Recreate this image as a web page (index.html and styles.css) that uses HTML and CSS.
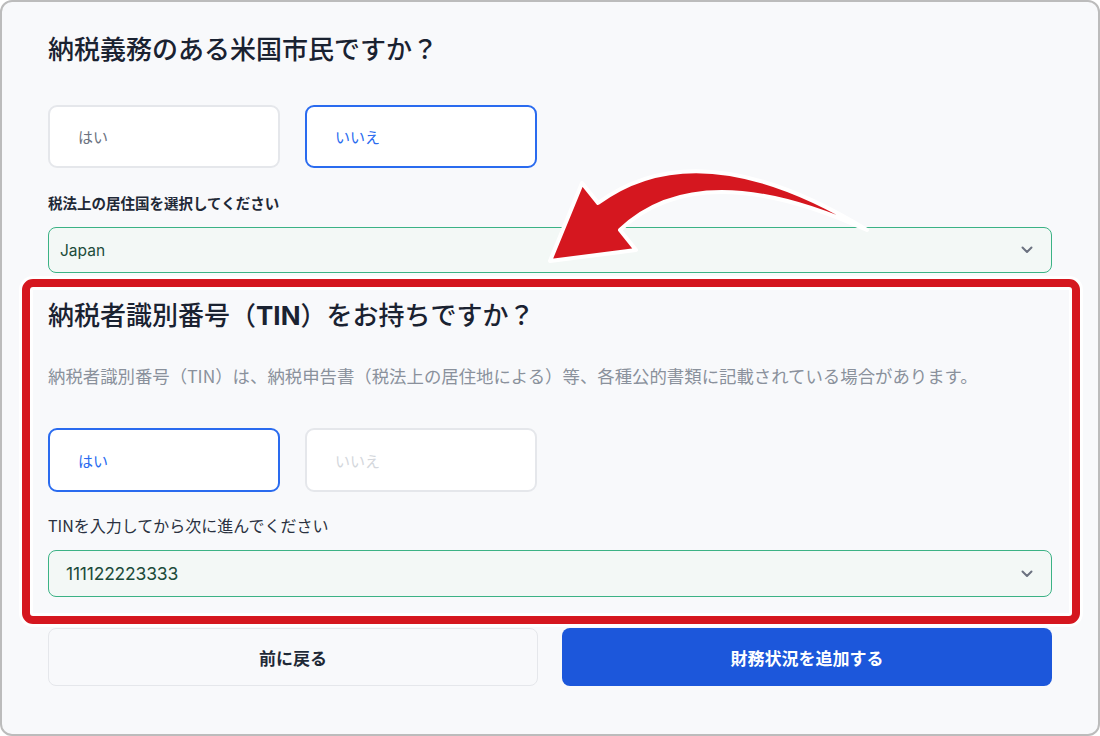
FILE: index.html
```html
<!DOCTYPE html>
<html lang="ja">
<head>
<meta charset="utf-8">
<title>TIN</title>
<link rel="stylesheet" href="styles.css">
</head>
<body>
<div class="frame">
  <h1 class="title">納税義務のある米国市民ですか？</h1>
  <div class="choices choices-1">
    <div class="choice">はい</div>
    <div class="choice selected">いいえ</div>
  </div>
  <div class="label label-bold">税法上の居住国を選択してください</div>
  <div class="select select-1">
    <span class="value value-1">Japan</span>
    <svg class="chev" width="12" height="8" viewBox="0 0 12 8"><path d="M1.5 1.5 L6 6 L10.5 1.5" fill="none" stroke="#6b7280" stroke-width="2" stroke-linecap="round" stroke-linejoin="round"/></svg>
  </div>

  <h2 class="title title-2">納税者識別番号（<b>TIN</b>）をお持ちですか？</h2>
  <p class="desc">納税者識別番号（TIN）は、納税申告書（税法上の居住地による）等、各種公的書類に記載されている場合があります。</p>
  <div class="choices choices-2">
    <div class="choice selected">はい</div>
    <div class="choice disabled">いいえ</div>
  </div>
  <div class="label label-2">TINを入力してから次に進んでください</div>
  <div class="select select-2">
    <span class="value value-2">111122223333</span>
    <svg class="chev" width="12" height="8" viewBox="0 0 12 8"><path d="M1.5 1.5 L6 6 L10.5 1.5" fill="none" stroke="#6b7280" stroke-width="2" stroke-linecap="round" stroke-linejoin="round"/></svg>
  </div>

  <div class="actions">
    <button class="btn btn-back">前に戻る</button>
    <button class="btn btn-primary">財務状況を追加する</button>
  </div>

  <div class="highlight"></div>
  <svg class="arrow" width="1100" height="736" viewBox="0 0 1100 736">
    <path d="M550 261 L582 183 L598 203 Q700 128 867 230 Q700 154 620 230 L636 250 Z" fill="#d5171f" stroke="#ffffff" stroke-width="4" stroke-linejoin="round"/>
  </svg>
</div>
</body>
</html>
```

FILE: styles.css
```css
* { box-sizing: border-box; }
html, body { margin: 0; padding: 0; }
body {
  width: 1100px;
  height: 736px;
  overflow: hidden;
  background: #ffffff;
  font-family: "Inter", "Noto Sans CJK JP", sans-serif;
}
.frame {
  position: relative;
  width: 1100px;
  height: 736px;
  border: 2px solid #bcbcbc;
  border-radius: 12px;
  background: #f8f9fb;
  padding: 28px 46px 0 46px;
  display: flex;
  flex-direction: column;
}
.title {
  margin: 0;
  font-size: 26px;
  line-height: 36px;
  font-weight: 500;
  color: #1a2231;
  font-family: "Noto Sans CJK JP", sans-serif;
}
.title b { font-family: "Inter", sans-serif; font-weight: 700; }
.choices {
  display: flex;
  gap: 25px;
}
.choices-1 { margin-top: 39px; }
.choices-2 { margin-top: 40px; }
.choice {
  width: 232px;
  height: 63px;
  border: 2px solid #e5e7eb;
  border-radius: 9px;
  background: #ffffff;
  display: flex;
  align-items: center;
  padding-left: 28px;
  font-size: 15px;
  color: #6b7280;
  font-family: "Noto Sans CJK JP", sans-serif;
}
.choices-2 .choice { height: 64px; }
.choice.selected {
  border-color: #2a6bef;
  color: #2a6bef;
}
.choice.disabled { color: #d4d7dc; }
.label {
  font-family: "Noto Sans CJK JP", sans-serif;
  color: #1f2937;
}
.label-bold {
  margin-top: 25px;
  font-size: 14.5px;
  line-height: 20px;
  font-weight: 600;
}
.label-2 {
  margin-top: 22px;
  font-size: 16px;
  line-height: 22px;
  font-weight: 400;
  color: #2a3140;
}
.select {
  margin-top: 14px;
  width: 1004px;
  height: 46px;
  border: 1px solid #3bb285;
  border-radius: 8px;
  background: #f3f8f6;
  display: flex;
  align-items: center;
  justify-content: space-between;
  padding: 0 18px 0 11px;
}
.select-2 { height: 47px; padding-left: 17px; }
.value {
  color: #1c4b3a;
  font-size: 15.5px;
}
.value-2 { font-size: 17.5px; letter-spacing: -0.2px; }
.chev { display: block; }
.title-2 { margin-top: 23px; }
.desc {
  margin: 30px 0 0 0;
  font-size: 17.4px;
  line-height: 24px;
  color: #8a919c;
  font-family: "Noto Sans CJK JP", sans-serif;
  white-space: nowrap;
}
.actions {
  margin-top: 31px;
  display: flex;
  gap: 24px;
}
.btn {
  width: 490px;
  height: 58px;
  border-radius: 8px;
  font-family: "Noto Sans CJK JP", sans-serif;
  font-size: 17px;
  font-weight: 700;
  cursor: pointer;
}
.btn-back {
  background: #f8f9fb;
  border: 1px solid #e5e7eb;
  color: #1f2937;
}
.btn-primary {
  background: #1c57db;
  border: none;
  color: #ffffff;
}
.highlight {
  position: absolute;
  left: 20px;
  top: 277px;
  width: 1058px;
  height: 345px;
  border: 8px solid #d5171f;
  border-radius: 11px;
  box-shadow: 0 0 0 3px #ffffff, inset 0 0 0 3px #ffffff;
  pointer-events: none;
}
.arrow {
  position: absolute;
  left: -2px;
  top: -2px;
  pointer-events: none;
}
```
